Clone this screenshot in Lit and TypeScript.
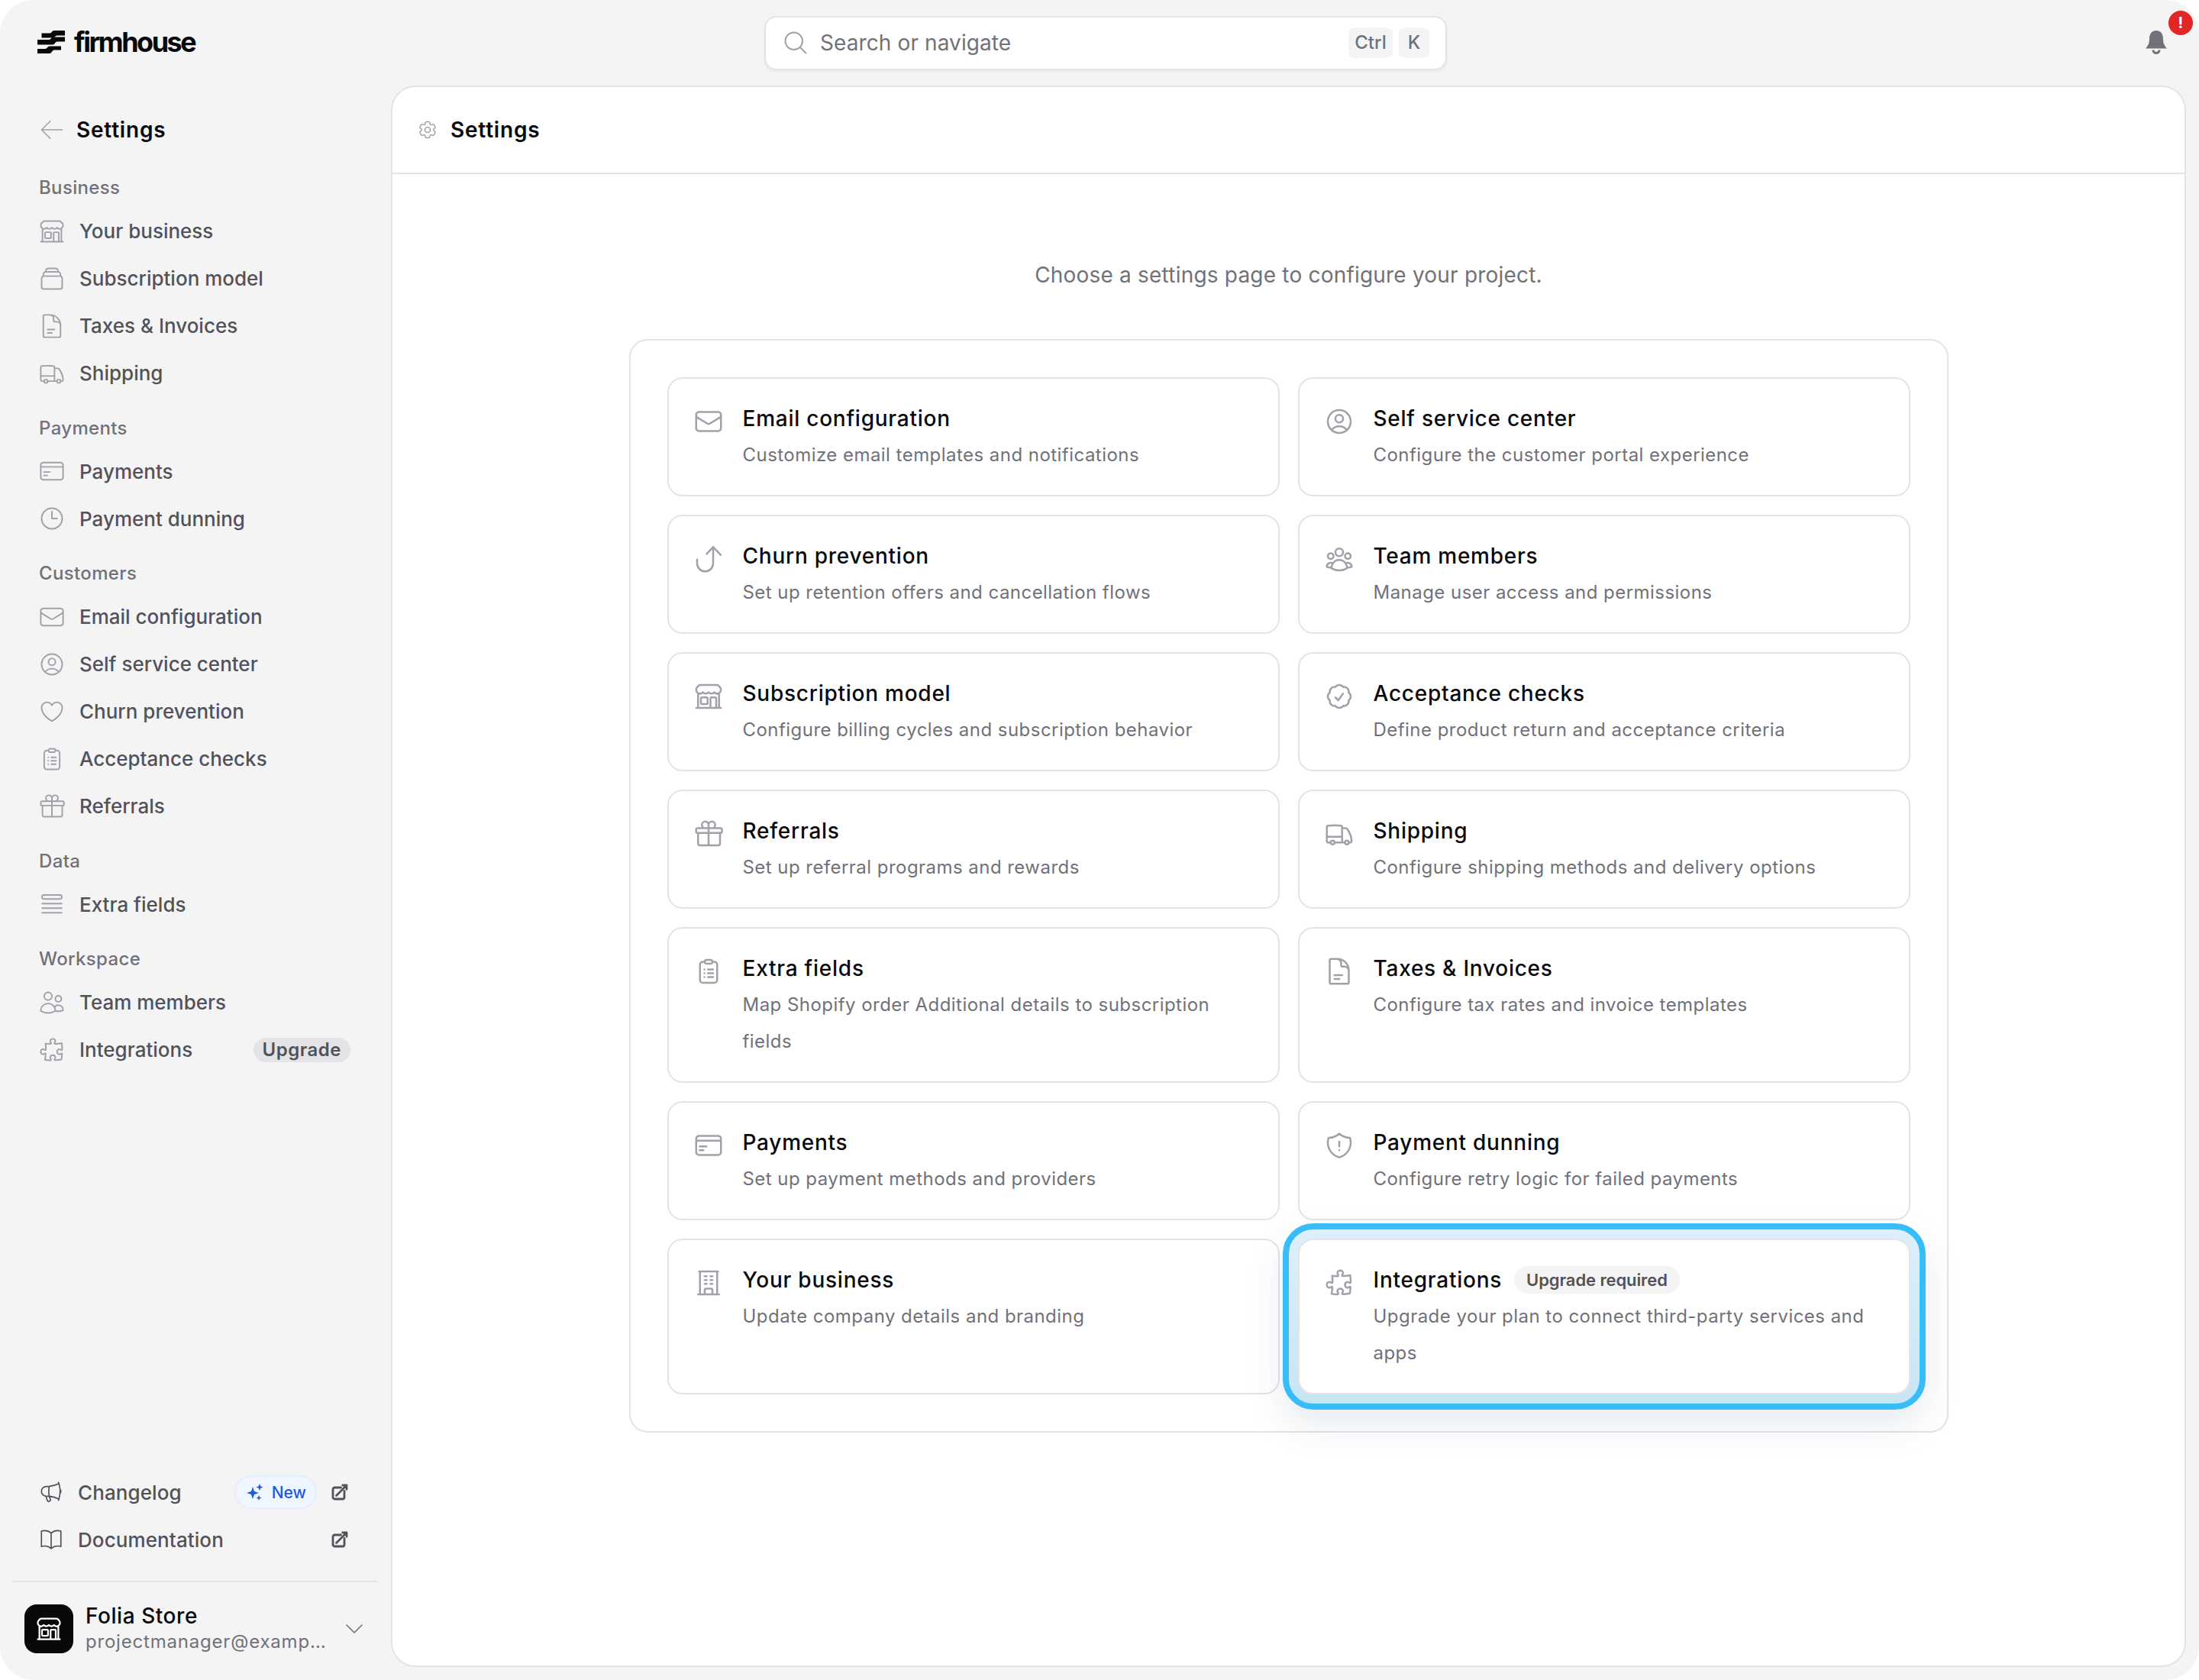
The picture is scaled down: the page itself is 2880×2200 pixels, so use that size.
import { LitElement, html, css } from "lit";
import { customElement } from "lit/decorators.js";

const P: Record<string, string> = {
  mail: "M21.75 6.75v10.5a2.25 2.25 0 0 1-2.25 2.25h-15a2.25 2.25 0 0 1-2.25-2.25V6.75m19.5 0A2.25 2.25 0 0 0 19.5 4.5h-15a2.25 2.25 0 0 0-2.25 2.25m19.5 0v.243a2.25 2.25 0 0 1-1.07 1.916l-7.5 4.615a2.25 2.25 0 0 1-2.36 0L3.32 8.91a2.25 2.25 0 0 1-1.07-1.916V6.75",
  userCircle: "M17.982 18.725A7.488 7.488 0 0 0 12 15.75a7.488 7.488 0 0 0-5.982 2.975m11.963 0a9 9 0 1 0-11.963 0m11.963 0A8.966 8.966 0 0 1 12 21a8.966 8.966 0 0 1-5.982-2.275M15 9.75a3 3 0 1 1-6 0 3 3 0 0 1 6 0Z",
  heart: "M21 8.25c0-2.485-2.099-4.5-4.688-4.5-1.935 0-3.597 1.126-4.312 2.733-.715-1.607-2.377-2.733-4.313-2.733C5.1 3.75 3 5.765 3 8.25c0 7.22 9 12 9 12s9-4.78 9-12Z",
  clock: "M12 6v6h4.5m4.5 0a9 9 0 1 1-18 0 9 9 0 0 1 18 0Z",
  store: "M13.5 21v-7.5a.75.75 0 0 1 .75-.75h3a.75.75 0 0 1 .75.75V21m-4.5 0H2.36m11.14 0H18m0 0h3.64m-1.39 0V9.349M3.75 21V9.349m0 0a3.001 3.001 0 0 0 3.75-.615A2.993 2.993 0 0 0 9.75 9.75c.896 0 1.7-.393 2.25-1.016a2.993 2.993 0 0 0 2.25 1.016c.896 0 1.7-.393 2.25-1.016a3.001 3.001 0 0 0 3.75.614m-16.5 0a3.004 3.004 0 0 1-.621-4.72l1.189-1.19A1.5 1.5 0 0 1 5.378 3h13.243a1.5 1.5 0 0 1 1.06.44l1.19 1.189a3 3 0 0 1-.621 4.72M6.75 18h3.75a.75.75 0 0 0 .75-.75V13.5a.75.75 0 0 0-.75-.75H6.75a.75.75 0 0 0-.75.75v3.75c0 .414.336.75.75.75Z",
  truck: "M8.25 18.75a1.5 1.5 0 0 1-3 0m3 0a1.5 1.5 0 0 0-3 0m3 0h6m-9 0H3.375a1.125 1.125 0 0 1-1.125-1.125V14.25m17.25 4.5a1.5 1.5 0 0 1-3 0m3 0a1.5 1.5 0 0 0-3 0m3 0h1.125c.621 0 1.129-.504 1.09-1.124a17.902 17.902 0 0 0-3.213-9.193 2.056 2.056 0 0 0-1.58-.86H14.25M16.5 18.75h-2.25m0-11.177v-.958c0-.568-.422-1.048-.987-1.106a48.554 48.554 0 0 0-10.026 0 1.106 1.106 0 0 0-.987 1.106v7.635m12-6.677v6.677m0 4.5v-4.5m0 0h-12",
  gift: "M21 11.25v8.25a1.5 1.5 0 0 1-1.5 1.5H5.25a1.5 1.5 0 0 1-1.5-1.5v-8.25M12 4.875A2.625 2.625 0 1 0 9.375 7.5H12m0-2.625V7.5m0-2.625A2.625 2.625 0 1 1 14.625 7.5H12m0 0V21m-8.625-9.75h18c.621 0 1.125-.504 1.125-1.125v-1.5c0-.621-.504-1.125-1.125-1.125h-18c-.621 0-1.125.504-1.125 1.125v1.5c0 .621.504 1.125 1.125 1.125Z",
  doc: "M19.5 14.25v-2.625a3.375 3.375 0 0 0-3.375-3.375h-1.5A1.125 1.125 0 0 1 13.5 7.125v-1.5a3.375 3.375 0 0 0-3.375-3.375H8.25m0 12.75h6m-6 3H12M10.5 2.25H5.625c-.621 0-1.125.504-1.125 1.125v17.25c0 .621.504 1.125 1.125 1.125h12.75c.621 0 1.125-.504 1.125-1.125V11.25a9 9 0 0 0-9-9Z",
  users: "M15 19.128a9.38 9.38 0 0 0 2.625.372 9.337 9.337 0 0 0 4.121-.952 4.125 4.125 0 0 0-7.533-2.493M15 19.128v-.003c0-1.113-.285-2.16-.786-3.07M15 19.128v.106A12.318 12.318 0 0 1 8.624 21c-2.331 0-4.512-.645-6.374-1.766l-.001-.109a6.375 6.375 0 0 1 11.964-3.07M12 6.375a3.375 3.375 0 1 1-6.75 0 3.375 3.375 0 0 1 6.75 0Zm8.25 2.25a2.625 2.625 0 1 1-5.25 0 2.625 2.625 0 0 1 5.25 0Z",
  group: "M18 18.72a9.094 9.094 0 0 0 3.741-.479 3 3 0 0 0-4.682-2.72m.94 3.198.001.031c0 .225-.012.447-.037.666A11.944 11.944 0 0 1 12 21c-2.17 0-4.207-.576-5.963-1.584A6.062 6.062 0 0 1 6 18.719m12 0a5.971 5.971 0 0 0-.941-3.197m0 0A5.995 5.995 0 0 0 12 12.75a5.995 5.995 0 0 0-5.058 2.772m0 0a3 3 0 0 0-4.681 2.72 8.986 8.986 0 0 0 3.74.477m.94-3.197a5.971 5.971 0 0 0-.94 3.197M15 6.75a3 3 0 1 1-6 0 3 3 0 0 1 6 0Zm6 3a2.25 2.25 0 1 1-4.5 0 2.25 2.25 0 0 1 4.5 0Zm-13.5 0a2.25 2.25 0 1 1-4.5 0 2.25 2.25 0 0 1 4.5 0Z",
  puzzle: "M14.25 6.087c0-.355.186-.676.401-.959.221-.29.349-.634.349-1.003 0-1.036-1.007-1.875-2.25-1.875s-2.25.84-2.25 1.875c0 .369.128.713.349 1.003.215.283.401.604.401.959v0a.64.64 0 0 1-.657.643 48.39 48.39 0 0 1-4.163-.3c.186 1.613.293 3.25.315 4.907a.656.656 0 0 1-.658.663v0c-.355 0-.676-.186-.959-.401a1.647 1.647 0 0 0-1.003-.349c-1.036 0-1.875 1.007-1.875 2.25s.84 2.25 1.875 2.25c.369 0 .713-.128 1.003-.349.283-.215.604-.401.959-.401v0c.31 0 .555.26.532.57a48.039 48.039 0 0 1-.642 5.056c1.518.19 3.058.309 4.616.354a.64.64 0 0 0 .657-.643v0c0-.355-.186-.676-.401-.959a1.647 1.647 0 0 1-.349-1.003c0-1.035 1.008-1.875 2.25-1.875 1.243 0 2.25.84 2.25 1.875 0 .369-.128.713-.349 1.003-.215.283-.4.604-.4.959v0c0 .333.277.599.61.58a48.1 48.1 0 0 0 5.427-.63 48.05 48.05 0 0 0 .582-4.717.532.532 0 0 0-.533-.57v0c-.355 0-.676.186-.959.401-.29.221-.634.349-1.003.349-1.035 0-1.875-1.007-1.875-2.25s.84-2.25 1.875-2.25c.37 0 .713.128 1.003.349.283.215.604.401.96.401v0a.656.656 0 0 0 .658-.663 48.422 48.422 0 0 0-.37-5.36c-1.886.342-3.81.574-5.766.689a.578.578 0 0 1-.61-.58v0Z",
  badge: "M9 12.75 11.25 15 15 9.75M21 12c0 1.268-.63 2.39-1.593 3.068a3.745 3.745 0 0 1-1.043 3.296 3.745 3.745 0 0 1-3.296 1.043A3.745 3.745 0 0 1 12 21c-1.268 0-2.39-.63-3.068-1.593a3.746 3.746 0 0 1-3.296-1.043 3.746 3.746 0 0 1-1.043-3.296A3.745 3.745 0 0 1 3 12c0-1.268.63-2.39 1.593-3.068a3.745 3.745 0 0 1 1.043-3.296 3.746 3.746 0 0 1 3.296-1.043A3.746 3.746 0 0 1 12 3c1.268 0 2.39.63 3.068 1.593a3.746 3.746 0 0 1 3.296 1.043 3.746 3.746 0 0 1 1.043 3.296A3.745 3.745 0 0 1 21 12Z",
  shield: "M12 9v3.75m0-10.036A11.959 11.959 0 0 1 3.598 6 11.99 11.99 0 0 0 3 9.75c0 5.592 3.824 10.29 9 11.622 5.176-1.332 9-6.03 9-11.622 0-1.31-.21-2.571-.598-3.751h-.152c-3.196 0-6.1-1.25-8.25-3.286Zm0 13.036h.008v.008H12v-.008Z",
  office: "M3.75 21h16.5M4.5 3h15M5.25 3v18m13.5-18v18M9 6.75h1.5m-1.5 3h1.5m-1.5 3h1.5m3-6H15m-1.5 3H15m-1.5 3H15M9 21v-3.375c0-.621.504-1.125 1.125-1.125h3.75c.621 0 1.125.504 1.125 1.125V21",
  search: "m21 21-5.197-5.197m0 0A7.5 7.5 0 1 0 5.196 5.196a7.5 7.5 0 0 0 10.607 10.607Z",
  arrowLeft: "M10.5 19.5 3 12m0 0 7.5-7.5M3 12h18",
  chevron: "m19.5 8.25-7.5 7.5-7.5-7.5",
  megaphone: "M10.34 15.84c-.688-.06-1.386-.09-2.09-.09H7.5a4.5 4.5 0 1 1 0-9h.75c.704 0 1.402-.03 2.09-.09m0 9.18c.253.962.584 1.892.985 2.783.247.55.06 1.21-.463 1.511l-.657.38c-.551.318-1.26.117-1.527-.461a20.845 20.845 0 0 1-1.44-4.282m3.102.069a18.03 18.03 0 0 1-.59-4.59c0-1.586.205-3.124.59-4.59m0 9.18a23.848 23.848 0 0 1 8.835 2.535M10.34 6.66a23.847 23.847 0 0 0 8.835-2.535m0 0A23.74 23.74 0 0 0 18.795 3m.38 1.125a23.91 23.91 0 0 1 1.014 5.395m-1.014 8.855c-.118.38-.245.754-.38 1.125m.38-1.125a23.91 23.91 0 0 0 1.014-5.395m0-3.46c.495.413.811 1.035.811 1.73 0 .695-.316 1.317-.811 1.73m0-3.46a24.347 24.347 0 0 1 0 3.46",
  book: "M12 6.042A8.967 8.967 0 0 0 6 3.75c-1.052 0-2.062.18-3 .512v14.25A8.987 8.987 0 0 1 6 18c2.305 0 4.408.867 6 2.292m0-14.25a8.966 8.966 0 0 1 6-2.292c1.052 0 2.062.18 3 .512v14.25A8.987 8.987 0 0 0 18 18a8.967 8.967 0 0 0-6 2.292m0-14.25v14.25",
  external: "M13.5 6H5.25A2.25 2.25 0 0 0 3 8.25v10.5A2.25 2.25 0 0 0 5.25 21h10.5A2.25 2.25 0 0 0 18 18.75V10.5m-10.5 6L21 3m0 0h-5.25M21 3v5.25",
  cog: "M9.594 3.94c.09-.542.56-.94 1.11-.94h2.593c.55 0 1.02.398 1.11.94l.213 1.281c.063.374.313.686.645.87.074.04.147.083.22.127.325.196.72.257 1.075.124l1.217-.456a1.125 1.125 0 0 1 1.37.49l1.296 2.247a1.125 1.125 0 0 1-.26 1.431l-1.003.827c-.293.241-.438.613-.43.992a7.723 7.723 0 0 1 0 .255c-.008.378.137.75.43.991l1.004.827c.424.35.534.955.26 1.43l-1.298 2.247a1.125 1.125 0 0 1-1.369.491l-1.217-.456c-.355-.133-.75-.072-1.076.124a6.47 6.47 0 0 1-.22.128c-.331.183-.581.495-.644.869l-.213 1.281c-.09.543-.56.94-1.11.94h-2.594c-.55 0-1.019-.398-1.11-.94l-.213-1.281c-.062-.374-.312-.686-.644-.87a6.52 6.52 0 0 1-.22-.127c-.325-.196-.72-.257-1.076-.124l-1.217.456a1.125 1.125 0 0 1-1.369-.49l-1.297-2.247a1.125 1.125 0 0 1 .26-1.431l1.004-.827c.292-.24.437-.613.43-.991a6.932 6.932 0 0 1 0-.255c.007-.38-.138-.751-.43-.992l-1.004-.827a1.125 1.125 0 0 1-.26-1.43l1.297-2.247a1.125 1.125 0 0 1 1.37-.491l1.216.456c.356.133.751.072 1.076-.124.072-.044.146-.086.22-.128.332-.183.582-.495.644-.869l.214-1.28ZM15 12a3 3 0 1 1-6 0 3 3 0 0 1 6 0Z",
  box: "M4.5 9.5V8.25A2.25 2.25 0 0 1 6.75 6V5A2.25 2.25 0 0 1 9 3h6a2.25 2.25 0 0 1 2.25 2v1a2.25 2.25 0 0 1 2.25 2.25V9.5M6.75 6h10.5M5 9.75h14a2 2 0 0 1 2 2v7.25a2 2 0 0 1-2 2H5a2 2 0 0 1-2-2v-7.25a2 2 0 0 1 2-2Z",
  card: "M4.5 4.5h15a2.25 2.25 0 0 1 2.25 2.25v10.5a2.25 2.25 0 0 1-2.25 2.25h-15a2.25 2.25 0 0 1-2.25-2.25V6.75A2.25 2.25 0 0 1 4.5 4.5ZM2.25 8.25h19.5M5 12.75h5.25M5 15.75h3",
  clipboard: "M9 4.5H7.5A2.25 2.25 0 0 0 5.25 6.75v12A2.25 2.25 0 0 0 7.5 21h9a2.25 2.25 0 0 0 2.25-2.25v-12A2.25 2.25 0 0 0 16.5 4.5H15M9 4.5a1.5 1.5 0 0 1 1.5-1.5h3A1.5 1.5 0 0 1 15 4.5 1.5 1.5 0 0 1 13.5 6h-3A1.5 1.5 0 0 1 9 4.5ZM8.75 10.5h.01M8.75 13.5h.01M8.75 16.5h.01M11.5 10.5h4M11.5 13.5h4M11.5 16.5h4",
  fields: "M5 4h14a1.5 1.5 0 0 1 0 3.5H5A1.5 1.5 0 0 1 5 4ZM3.5 11.5h17M3.5 15.5h17M3.5 19.5h17",
  hook: "M3 12.5v3a6.3 6.3 0 0 0 12.6 0V2.6M10.5 8l5.1-5.4L21.5 8.8",
};

const ico = (name: string, cls = "") =>
  html`<svg class="ic ${cls}" viewBox="0 0 24 24" fill="none" stroke="currentColor" stroke-width="1.5" stroke-linecap="round" stroke-linejoin="round" aria-hidden="true"><path d=${P[name]}></path></svg>`;

const NAV: { label: string; items: [string, string][] }[] = [
  { label: "Business", items: [["Your business", "store"], ["Subscription model", "box"], ["Taxes & Invoices", "doc"], ["Shipping", "truck"]] },
  { label: "Payments", items: [["Payments", "card"], ["Payment dunning", "clock"]] },
  { label: "Customers", items: [["Email configuration", "mail"], ["Self service center", "userCircle"], ["Churn prevention", "heart"], ["Acceptance checks", "clipboard"], ["Referrals", "gift"]] },
  { label: "Data", items: [["Extra fields", "fields"]] },
  { label: "Workspace", items: [["Team members", "users"], ["Integrations", "puzzle"]] },
];

const CARDS: [string, string, string][] = [
  ["Email configuration", "Customize email templates and notifications", "mail"],
  ["Self service center", "Configure the customer portal experience", "userCircle"],
  ["Churn prevention", "Set up retention offers and cancellation flows", "hook"],
  ["Team members", "Manage user access and permissions", "group"],
  ["Subscription model", "Configure billing cycles and subscription behavior", "store"],
  ["Acceptance checks", "Define product return and acceptance criteria", "badge"],
  ["Referrals", "Set up referral programs and rewards", "gift"],
  ["Shipping", "Configure shipping methods and delivery options", "truck"],
  ["Extra fields", "Map Shopify order Additional details to subscription fields", "clipboard"],
  ["Taxes & Invoices", "Configure tax rates and invoice templates", "doc"],
  ["Payments", "Set up payment methods and providers", "card"],
  ["Payment dunning", "Configure retry logic for failed payments", "shield"],
  ["Your business", "Update company details and branding", "office"],
  ["Integrations", "Upgrade your plan to connect third-party services and apps", "puzzle"],
];

@customElement("app-root")
export class AppRoot extends LitElement {
  static styles = css`
    :host { display: block; width: 2880px; height: 2200px; font-family: Inter, "Liberation Sans", sans-serif; color: #09090b; }
    * { box-sizing: border-box; }
    .app { width: 100%; height: 100%; background: #f4f4f5; border-radius: 44px; display: flex; flex-direction: column; overflow: hidden; }
    .ic { display: block; flex: none; }
    .top { height: 112px; flex: none; display: flex; align-items: center; position: relative; padding-left: 49px; }
    .brand { display: flex; align-items: center; gap: 12px; width: 952px; flex: none; margin-top: -2px; }
    .mark { width: 36px; height: 30px; display: block; }
    .word { font-size: 36px; font-weight: 700; letter-spacing: -2.5px; line-height: 40px; color: #09090b; }
    .search { width: 894px; height: 71px; background: #fff; border: 2px solid #e4e4e7; border-radius: 16px; box-shadow: 0 2px 4px rgba(0,0,0,.05); display: flex; align-items: center; padding: 0 21px; color: #71717a; font-size: 28px; letter-spacing: .1px; }
    .search .ic { width: 36px; height: 36px; color: #a1a1aa; margin-right: 14px; stroke-width: 1.3; }
    .search .ph { flex: 1; }
    .kbd { height: 40px; padding: 0 8px; background: #f4f4f5; border-radius: 8px; font-size: 24px; line-height: 40px; margin-left: 8px; color: #71717a; font-weight: 500; min-width: 40px; text-align: center; }
    .bell { position: absolute; left: 2808px; top: 38px; width: 32px; height: 36px; color: #71717a; }
    .bell svg { display: block; width: 32px; height: 36px; }
    .dot { position: absolute; left: 2840px; top: 14px; width: 32px; height: 32px; border-radius: 50%; background: #e22626; color: #fff; font-size: 20px; font-weight: 700; line-height: 32px; text-align: center; }

    .body { flex: 1; display: flex; min-height: 0; }
    .side { width: 512px; flex: none; display: flex; flex-direction: column; padding-top: 27px; }
    .back { height: 62px; display: flex; align-items: center; margin-left: 50px; gap: 14px; font-size: 28px; letter-spacing: .8px; font-weight: 600; color: #09090b; }
    .back .ic { width: 36px; height: 36px; color: #a1a1aa; stroke-width: 1.1; }
    .groups { padding-top: 29px; }
    .group + .group { margin-top: 25px; }
    .glabel { margin-left: 51px; height: 32px; line-height: 32px; font-size: 24px; font-weight: 500; color: #71717a; letter-spacing: .35px; margin-bottom: 9.5px; }
    .item { height: 62px; display: flex; align-items: center; padding-left: 50px; font-size: 26px; letter-spacing: 0; font-weight: 500; color: #52525b; }
    .item .ic { width: 36px; height: 36px; color: #a1a1aa; margin-right: 18px; stroke-width: 1.3; }
    .up { margin-left: auto; margin-right: 53px; height: 32px; line-height: 32px; padding: 0 12px; background: #e4e4e7; border-radius: 16px; font-size: 24px; font-weight: 600; color: #52525b; letter-spacing: .5px; }
    .foot { margin-top: auto; }
    .link { height: 62px; display: flex; align-items: center; padding-left: 50px; font-size: 26px; letter-spacing: .1px; font-weight: 500; color: #52525b; }
    .link > .ic:first-child { width: 34px; height: 34px; margin-right: 18px; color: #52525b; stroke-width: 1.2; }
    .link .ext { width: 24px; height: 24px; margin-left: auto; margin-right: 55px; stroke-width: 2.8; color: #52525b; }
    .new { margin-left: auto; height: 44px; display: flex; align-items: center; gap: 10px; padding: 0 12px 0 13px; border: 2px solid #e4effe; background: #eff6ff; border-radius: 22px; color: #1d5ae0; font-size: 21px; letter-spacing: 0; font-weight: 500; }
    .new svg { width: 24px; height: 24px; display: block; }
    .new + .ext { margin-left: 18px; }
    .acct { margin: 23px 17px 0 16px; border-top: 2px solid #e4e4e7; padding: 27px 0 33px 16px; display: flex; align-items: center; }
    .ava { width: 64px; height: 64px; flex: none; background: #09090b; border-radius: 16px; color: #fff; display: flex; align-items: center; justify-content: center; margin-right: 16px; }
    .ava .ic { width: 36px; height: 36px; stroke-width: 1.5; }
    .who { width: 316px; flex: none; }
    .who b { display: block; font-size: 28px; line-height: 34px; font-weight: 500; color: #09090b; letter-spacing: .55px; }
    .who span { display: block; font-size: 24px; line-height: 34px; color: #71717a; white-space: nowrap; overflow: hidden; text-overflow: ellipsis; letter-spacing: .8px; }
    .acct > .ic { width: 32px; height: 32px; margin-left: 20px; color: #71717a; stroke-width: 1.2; }

    .main { width: 2351px; height: 2071px; flex: none; background: #fff; border: 2px solid #e4e4e7; border-radius: 32px; display: flex; flex-direction: column; }
    .mhead { height: 114px; flex: none; border-bottom: 2px solid #e4e4e7; display: flex; align-items: center; padding-left: 32px; gap: 16px; font-size: 28px; letter-spacing: .8px; font-weight: 600; }
    .mhead .ic { width: 28px; height: 28px; color: #a1a1aa; stroke-width: 1.3; }
    .mbody { flex: 1; display: flex; flex-direction: column; align-items: center; padding-top: 110px; }
    .intro { font-size: 28px; letter-spacing: .2px; line-height: 44px; color: #71717a; }
    .panel { margin-top: 62px; width: 1728px; border: 2px solid #e4e4e7; border-radius: 24px; padding: 48px; display: grid; grid-template-columns: 1fr 1fr; gap: 24px; }
    .c { position: relative; border: 2px solid #e4e4e7; border-radius: 20px; background: #fff; padding: 32px 32px 28px; display: flex; gap: 25px; min-width: 0; }
    .c > .ic { width: 40px; height: 40px; margin-top: 4px; color: #a1a1aa; stroke-width: 1.5; }
    .t { font-size: 28px; line-height: 40px; font-weight: 500; color: #09090b; letter-spacing: .75px; display: flex; align-items: center; }
    .d { margin-top: 4px; font-size: 24px; line-height: 48px; color: #71717a; letter-spacing: .46px; }
    .pill { margin-left: 16px; height: 36px; line-height: 36px; padding: 0 16px; background: #f4f4f5; border-radius: 18px; font-size: 22px; font-weight: 600; color: #52525b; letter-spacing: -.1px; }
    .hl { z-index: 1; }
    .hl::before { content: ""; position: absolute; inset: -22px; z-index: -1; border: 8px solid #38bdf8; border-radius: 40px; background: linear-gradient(#dcf0fb, #c8e5f3); box-shadow: 0 20px 50px rgba(0,60,100,.1); }
    .hl::after { content: ""; position: absolute; inset: -2px; z-index: -1; border-radius: 20px; background: #fff; border: 2px solid #e4e4e7; }
  `;

  render() {
    return html`<div class="app">
      <header class="top">
        <div class="brand">
          <svg class="mark" viewBox="0 0 36 30" fill="#09090b" aria-hidden="true">
            <path d="M5.500 3.500H16C19 3.500 19 0 22 0H36V6.500H26C23 6.500 23 9.500 20 9.500H5.500Z"></path>
            <path d="M0 12H15C18 12 18 8.500 21 8.500H36V14.500H26C23 14.500 23 18.500 20 18.500H0Z"></path>
            <path d="M0 24H10C13 24 13 20.500 16 20.500H31V25.500H22C19 25.500 19 30 16 30H0Z"></path>
          </svg>
          <span class="word">firmhouse</span>
        </div>
        <div class="search">
          ${ico("search")}<span class="ph">Search or navigate</span>
          <span class="kbd">Ctrl</span><span class="kbd">K</span>
        </div>
        <div class="bell"><svg viewBox="0 0 32 36" fill="currentColor" aria-hidden="true"><path d="M16 2C9.5 2 7 7 7 13c0 6-2 9-5 12.500h28C27 22 25 19 25 13c0-6-2.500-11-9-11Z"></path><path d="M10.500 27.500a5.500 5.500 0 0 0 11 0h-3a2.500 2.500 0 0 1-5 0Z"></path></svg></div>
        <div class="dot">!</div>
      </header>
      <div class="body">
        <aside class="side">
          <div class="back">${ico("arrowLeft")}<span>Settings</span></div>
          <nav class="groups">
            ${NAV.map(g => html`<div class="group">
              <div class="glabel">${g.label}</div>
              ${g.items.map(([t, i]) => html`<div class="item">${ico(i)}<span>${t}</span>${t === "Integrations" ? html`<span class="up">Upgrade</span>` : ""}</div>`)}
            </div>`)}
          </nav>
          <div class="foot">
            <div class="link">${ico("megaphone")}<span>Changelog</span>
              <span class="new"><svg viewBox="0 0 24 24" fill="currentColor" aria-hidden="true"><path d="M9 5l2 6 6 2-6 2-2 6-2-6-6-2 6-2Z"></path><path d="M18 1l1.300 3.200L22.500 5.500l-3.200 1.300L18 10l-1.300-3.200L13.500 5.500l3.200-1.300Z"></path><path d="M17 16l1 2.500 2.500 1-2.500 1-1 2.500-1-2.500-2.500-1 2.500-1Z"></path></svg>New</span>
              ${ico("external", "ext")}</div>
            <div class="link">${ico("book")}<span>Documentation</span>${ico("external", "ext")}</div>
            <div class="acct">
              <div class="ava">${ico("store")}</div>
              <div class="who"><b>Folia Store</b><span>projectmanager@example.com</span></div>
              ${ico("chevron")}
            </div>
          </div>
        </aside>
        <main class="main">
          <div class="mhead">${ico("cog")}<span>Settings</span></div>
          <div class="mbody">
            <div class="intro">Choose a settings page to configure your project.</div>
            <div class="panel">
              ${CARDS.map(([t, d, i]) => html`<div class="c ${t === "Integrations" ? "hl" : ""}">
                ${ico(i)}
                <div>
                  <div class="t">${t}${t === "Integrations" ? html`<span class="pill">Upgrade required</span>` : ""}</div>
                  <div class="d">${d}</div>
                </div>
              </div>`)}
            </div>
          </div>
        </main>
      </div>
    </div>`;
  }
}
